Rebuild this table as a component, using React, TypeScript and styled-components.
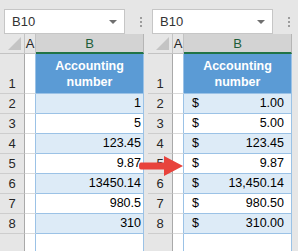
import React from "react";
import styled, { createGlobalStyle, css } from "styled-components";

const GlobalStyle = createGlobalStyle`
  html, body {
    margin: 0;
    padding: 0;
    background: #e6e6e6;
  }
  body {
    font-family: "Liberation Sans", Arial, sans-serif;
    overflow: hidden;
  }
`;

const left = ["1", "5", "123.45", "9.87", "13450.14", "980.5", "310"];
const right = ["1.00", "5.00", "123.45", "9.87", "13,450.14", "980.50", "310.00"];

type PanelProps = {
  values: string[];
  money?: boolean;
};

const Panel: React.FC<PanelProps> = ({ values, money }) => {
  return (
    <PanelWrap>
      <Toolbar>
        <NameBox>
          B10
          <Caret />
        </NameBox>
        <Dots>
          <span />
          <span />
          <span />
        </Dots>
      </Toolbar>
      <Grid>
        <Corner />
        <ColHeader>A</ColHeader>
        <ColHeader $active>B</ColHeader>

        <RowHeader>1</RowHeader>
        <EmptyCell />
        <TitleCell>
          Accounting
          <br />
          number
        </TitleCell>

        {values.map((v, i) => (
          <React.Fragment key={i}>
            <RowHeader>{i + 2}</RowHeader>
            <EmptyCell />
            <DataCell $shade={i % 2 === 0} $money={money}>
              {money && <span>$</span>}
              <span>{v}</span>
            </DataCell>
          </React.Fragment>
        ))}

        <RowHeader />
        <EmptyCell />
        <DataCell />
      </Grid>
    </PanelWrap>
  );
};

const App: React.FC = () => {
  return (
    <>
      <GlobalStyle />
      <Page>
        <Panel values={left} />
        <Panel values={right} money />
        <Arrow width="50" height="26" viewBox="0 0 50 26">
          <path
            d="M4 9.5 L27 9.5 L27 3 L46 13 L27 23 L27 16.5 L4 16.5 Q2 16.5 2 13 Q2 9.5 4 9.5 Z"
            fill="#e8433c"
          />
        </Arrow>
      </Page>
    </>
  );
};

const Page = styled.div`
  position: relative;
  display: flex;
  width: 298px;
  height: 251px;
  overflow: hidden;
`;

const PanelWrap = styled.div`
  width: 148px;
  flex: none;
  display: flex;
  flex-direction: column;
`;

const Toolbar = styled.div`
  height: 44px;
  display: flex;
  align-items: flex-start;
  padding: 9px 0 0 4px;
  box-sizing: border-box;
  gap: 15px;
`;

const NameBox = styled.div`
  position: relative;
  width: 121px;
  height: 25px;
  box-sizing: border-box;
  background: #fff;
  border: 1px solid #c6c6c6;
  padding-left: 7px;
  font-size: 13px;
  line-height: 23px;
  color: #333;
`;

const Caret = styled.i`
  position: absolute;
  right: 7px;
  top: 10px;
  width: 0;
  height: 0;
  border-left: 4px solid transparent;
  border-right: 4px solid transparent;
  border-top: 4px solid #6f6f6f;
`;

const Dots = styled.div`
  display: flex;
  flex-direction: column;
  gap: 2px;
  padding-top: 8px;
  span {
    width: 2px;
    height: 2px;
    background: #9c9c9c;
  }
`;

const Grid = styled.div`
  display: grid;
  grid-template-columns: 25px 11px 108px;
  grid-template-rows: 20px 40px repeat(8, 20px);
  font-size: 12.5px;
  > * {
    box-sizing: border-box;
  }
`;

const Corner = styled.div`
  position: relative;
  background: #e6e6e6;
  border-right: 1px solid #c3c3c3;
  border-bottom: 1px solid #c3c3c3;
  &::after {
    content: "";
    position: absolute;
    right: 3px;
    bottom: 3px;
    width: 13px;
    height: 13px;
    background: #c4c4c4;
    clip-path: polygon(100% 0, 100% 100%, 0 100%);
  }
`;

const ColHeader = styled.div<{ $active?: boolean }>`
  background: #e6e6e6;
  border-right: 1px solid #c3c3c3;
  border-bottom: 1px solid #c3c3c3;
  color: #262626;
  font-size: 13px;
  display: flex;
  align-items: center;
  justify-content: center;
  ${(p) =>
    p.$active &&
    css`
      background: #d3d3d3;
      color: #1e5e3a;
      border-bottom: 2px solid #217346;
      border-right: 1px solid #b5b5b5;
    `}
`;

const RowHeader = styled.div`
  background: #e6e6e6;
  border-right: 1px solid #a9a9a9;
  border-bottom: 1px solid #cdcdcd;
  color: #262626;
  font-size: 13px;
  display: flex;
  align-items: flex-end;
  justify-content: center;
  padding-bottom: 2px;
  line-height: 15px;
`;

const EmptyCell = styled.div`
  background: #fff;
  border-bottom: 1px solid #dadada;
  border-right: 1px solid #9bc2e6;
`;

const TitleCell = styled.div`
  background: #5b9bd5;
  color: #fff;
  font-weight: bold;
  font-size: 12.5px;
  line-height: 16px;
  text-align: center;
  display: flex;
  align-items: center;
  justify-content: center;
  border-right: 1px solid #9bc2e6;
  border-bottom: 1px solid #9bc2e6;
`;

const DataCell = styled.div<{ $shade?: boolean; $money?: boolean }>`
  background: ${(p) => (p.$shade ? "#ddebf7" : "#fff")};
  border-right: 1px solid #9bc2e6;
  border-bottom: 1px solid #9bc2e6;
  color: #000;
  display: flex;
  align-items: flex-end;
  justify-content: ${(p) => (p.$money ? "space-between" : "flex-end")};
  padding: ${(p) => (p.$money ? "0 7px 2px 8px" : "0 2px 2px 0")};
  line-height: 15px;
`;

const Arrow = styled.svg`
  position: absolute;
  left: 137px;
  top: 153px;
`;

export default App;
